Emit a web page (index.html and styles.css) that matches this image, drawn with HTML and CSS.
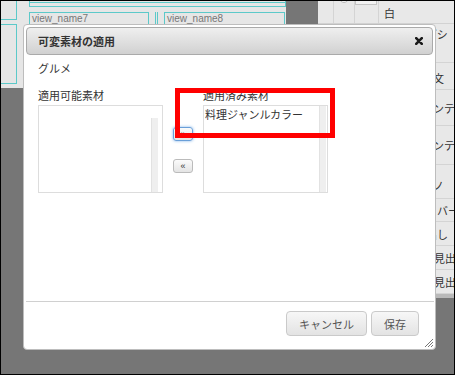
FILE: index.html
```html
<!DOCTYPE html>
<html lang="ja">
<head>
    <meta http-equiv="Content-Type" content="text/html; charset=UTF-8">
    <title>可変素材の適用</title>
    <link rel="stylesheet" href="styles.css">
</head>
<body>
    <div class="screen">
        <!-- Page behind the dialog -->
        <div class="page">
            <div class="page-left">
                <div class="side-strip">
                    <div class="side-box side-box-top"></div>
                    <div class="side-box side-box-main"></div>
                </div>
                <div class="view-area">
                    <div class="view-top"><div class="view-top-inner"></div></div>
                    <div class="view-row">
                        <div class="view-box">view_name7</div>
                        <div class="view-split"></div>
                        <div class="view-box view-box-wide">view_name8</div>
                    </div>
                </div>
            </div>
            <div class="page-gap"></div>
            <div class="page-right">
                <div class="prop-head">
                    <div class="prop-cell prop-cell-a"></div>
                    <div class="prop-cell prop-cell-b"><span class="radio"></span></div>
                    <div class="prop-cell prop-cell-c"><span class="swatch"></span></div>
                    <div class="prop-cell prop-cell-d">白</div>
                </div>
                <div class="prop-list">
                    <div class="prop-row row-1"><span class="cut">デザインブシ</span></div>
                    <div class="prop-row row-2">文</div>
                    <div class="prop-row row-3">ンテ</div>
                    <div class="prop-row row-4">ンテ</div>
                    <div class="prop-row row-5">ノ</div>
                    <div class="prop-row row-6"><span class="cut">ッバー</span></div>
                    <div class="prop-row row-7"><span class="cut">出し</span></div>
                    <div class="prop-row row-8"><span class="cut">中見出</span></div>
                    <div class="prop-row row-9"><span class="cut">小見出</span></div>
                </div>
            </div>
        </div>

        <!-- Dialog -->
        <div class="dialog">
            <div class="dialog-title">
                <span>可変素材の適用</span>
                <svg class="close-icon" width="8" height="8" viewBox="0 0 8 8">
                    <path d="M1.2 1.2 L6.8 6.8 M6.8 1.2 L1.2 6.8" stroke="#1a1a1a" stroke-width="2.6" stroke-linecap="round"/>
                </svg>
            </div>
            <div class="dialog-content">
                <p class="group-name">グルメ</p>
                <div class="picker">
                    <div class="picker-col">
                        <div class="picker-label">適用可能素材</div>
                        <div class="list-box">
                            <div class="list-items"></div>
                            <div class="track track-left"></div>
                        </div>
                    </div>
                    <div class="picker-buttons">
                        <button class="move-btn focused">»</button>
                        <button class="move-btn">«</button>
                    </div>
                    <div class="picker-col">
                        <div class="picker-label">適用済み素材</div>
                        <div class="list-box">
                            <div class="list-items">
                                <div class="list-item">料理ジャンルカラー</div>
                            </div>
                            <div class="track track-right"></div>
                        </div>
                    </div>
                </div>
            </div>
            <div class="dialog-footer">
                <button class="btn">キャンセル</button>
                <button class="btn">保存</button>
            </div>
            <svg class="grip" width="10" height="10" viewBox="0 0 10 10">
                <path d="M9 1 L1 9 M9 4 L4 9 M9 7 L7 9" stroke="#777" stroke-width="1"/>
            </svg>
        </div>

        <!-- Annotation box -->
        <div class="highlight"></div>
    </div>
</body>
</html>
```

FILE: styles.css
```css
/* General Reset */
* {
    margin: 0;
    padding: 0;
    box-sizing: border-box;
    font-family: "Noto Sans CJK JP", "Liberation Sans", sans-serif;
}

body {
    background-color: #000000;
}

.screen {
    position: relative;
    width: 455px;
    height: 375px;
    border: 1px solid #000000;
    background-color: #767676;
    overflow: hidden;
}

/* Page behind the dialog */
.page {
    display: flex;
    align-items: flex-start;
    height: 100%;
}

.page-left {
    display: flex;
    width: 289px;
    height: 87px;
    background-color: #e6e6e6;
}

.side-strip {
    width: 16px;
    flex-shrink: 0;
}

.side-box {
    width: 16px;
    border: 1px solid #5cc9c9;
    border-left: none;
}

.side-box-top {
    height: 19px;
    border-top: none;
}

.side-box-main {
    height: 60px;
    margin-top: 4px;
}

.view-area {
    width: 257px;
    margin-left: 12px;
}

.view-top {
    height: 6px;
    border: 1px solid #5cc9c9;
    border-top: none;
}

.view-top-inner {
    height: 2px;
    border-bottom: 1px solid #5cc9c9;
}

.view-row {
    display: flex;
    margin-top: 5px;
}

.view-box {
    width: 120px;
    height: 40px;
    border: 1px solid #5cc9c9;
    padding-left: 2px;
    font-family: "Liberation Sans", sans-serif;
    font-size: 10px;
    line-height: 11px;
    color: #777777;
}

.view-box-wide {
    width: 121px;
}

.view-split {
    width: 3px;
    height: 40px;
    margin: 0 6px;
    border-left: 1px solid #5cc9c9;
    border-right: 1px solid #5cc9c9;
}

.page-gap {
    width: 32px;
    flex-shrink: 0;
}

.page-right {
    flex-grow: 1;
    height: 297px;
    background-color: #e8e8e8;
    border-bottom: 5px solid #b9b9b9;
}

.prop-head {
    display: flex;
    height: 23px;
    border-bottom: 1px solid #d2d2d2;
}

.prop-cell {
    height: 100%;
    border-right: 1px solid #d4d4d4;
    overflow: hidden;
}

.prop-cell-a {
    width: 16px;
}

.prop-cell-b {
    width: 21px;
    padding-left: 5px;
}

.prop-cell-c {
    width: 24px;
}

.prop-cell-d {
    flex-grow: 1;
    border-right: none;
    padding: 4px 0 0 5px;
    font-size: 11px;
    line-height: 16px;
    color: #333333;
}

.radio {
    display: block;
    width: 10px;
    height: 10px;
    margin-top: -8px;
    border: 1px solid #bdbdbd;
    border-radius: 50%;
    background-color: #f4f4f4;
}

.swatch {
    display: block;
    width: 22px;
    height: 4px;
    border: 1px solid #c4c4c4;
    border-top: none;
    background-color: #f2f2f2;
}

.prop-list {
    margin-left: 113px;
    border-left: 1px solid #d4d4d4;
}

.prop-row {
    display: flex;
    align-items: center;
    padding-left: 1px;
    border-bottom: 1px solid #d4d4d4;
    font-size: 11px;
    color: #333333;
    white-space: nowrap;
    overflow: hidden;
}

.prop-row .cut {
    margin-left: -7px;
}

.row-1 {
    height: 39px;
    align-items: flex-start;
    padding-top: 2px;
}

.row-1 .cut {
    margin-left: -51px;
}

.row-2 { height: 27px; padding-top: 3px; }
.row-3 { height: 36px; }
.row-4 { height: 39px; }
.row-5 { height: 34px; padding-top: 6px; }
.row-6 { height: 23px; }
.row-7 { height: 24px; }
.row-8 { height: 24px; }
.row-9 { height: 24px; }

.row-8 .cut,
.row-9 .cut {
    margin-left: -10px;
}

/* Dialog */
.dialog {
    position: absolute;
    left: 22px;
    top: 23px;
    width: 413px;
    height: 326px;
    display: flex;
    flex-direction: column;
    background-color: #ffffff;
    border: 1px solid #bdbdbd;
    border-radius: 4px;
}

.dialog-title {
    display: flex;
    justify-content: space-between;
    align-items: center;
    height: 28px;
    margin: 2px 2px 0 2px;
    padding: 0 9px 0 11px;
    border: 1px solid #aaaaaa;
    border-radius: 4px;
    background: linear-gradient(#efefef, #d1d1d1);
    font-size: 11px;
    font-weight: bold;
    color: #333333;
}

.dialog-content {
    flex-grow: 1;
    padding: 5px 14px 0;
    font-size: 11px;
    color: #333333;
}

.group-name {
    line-height: 16px;
    margin-bottom: 11px;
}

.picker {
    display: grid;
    grid-template-columns: 125px 20px 125px;
    column-gap: 10px;
}

.picker-label {
    line-height: 16px;
    margin-bottom: 2px;
}

.list-box {
    display: flex;
    height: 88px;
    border: 1px solid #dddddd;
}

.list-items {
    flex-grow: 1;
    padding: 0 1px;
}

.list-item {
    line-height: 16px;
}

.track {
    width: 7px;
    background-color: #efefef;
    border-left: 1px solid #e2e2e2;
}

.track-left {
    margin: 12px 4px 0 0;
}

.track-right {
    margin-right: 1px;
}

.picker-buttons {
    display: flex;
    flex-direction: column;
    padding-top: 40px;
    gap: 18px;
}

.move-btn {
    width: 20px;
    height: 14px;
    border: 1px solid #bbbbbb;
    border-radius: 3px;
    background: linear-gradient(#fbfbfb, #e4e4e4);
    font-family: "Liberation Sans", sans-serif;
    font-size: 9px;
    line-height: 11px;
    color: #333333;
}

.move-btn.focused {
    border-color: #6a9fd8;
    box-shadow: 0 0 3px #7fb2ea;
}

.dialog-footer {
    display: flex;
    justify-content: flex-end;
    gap: 4px;
    height: 48px;
    margin: 0 1px 0 2px;
    padding: 9px 15px 0 0;
    border-top: 1px solid #d0d0d0;
}

.btn {
    height: 25px;
    padding: 0 12px;
    border: 1px solid #cacaca;
    border-radius: 4px;
    background: linear-gradient(#f7f7f7, #e3e3e3);
    font-size: 11px;
    color: #555555;
}

.grip {
    position: absolute;
    right: 1px;
    bottom: 1px;
}

/* Annotation box */
.highlight {
    position: absolute;
    left: 174px;
    top: 87px;
    width: 160px;
    height: 50px;
    border: 5px solid #ff0000;
}
```
